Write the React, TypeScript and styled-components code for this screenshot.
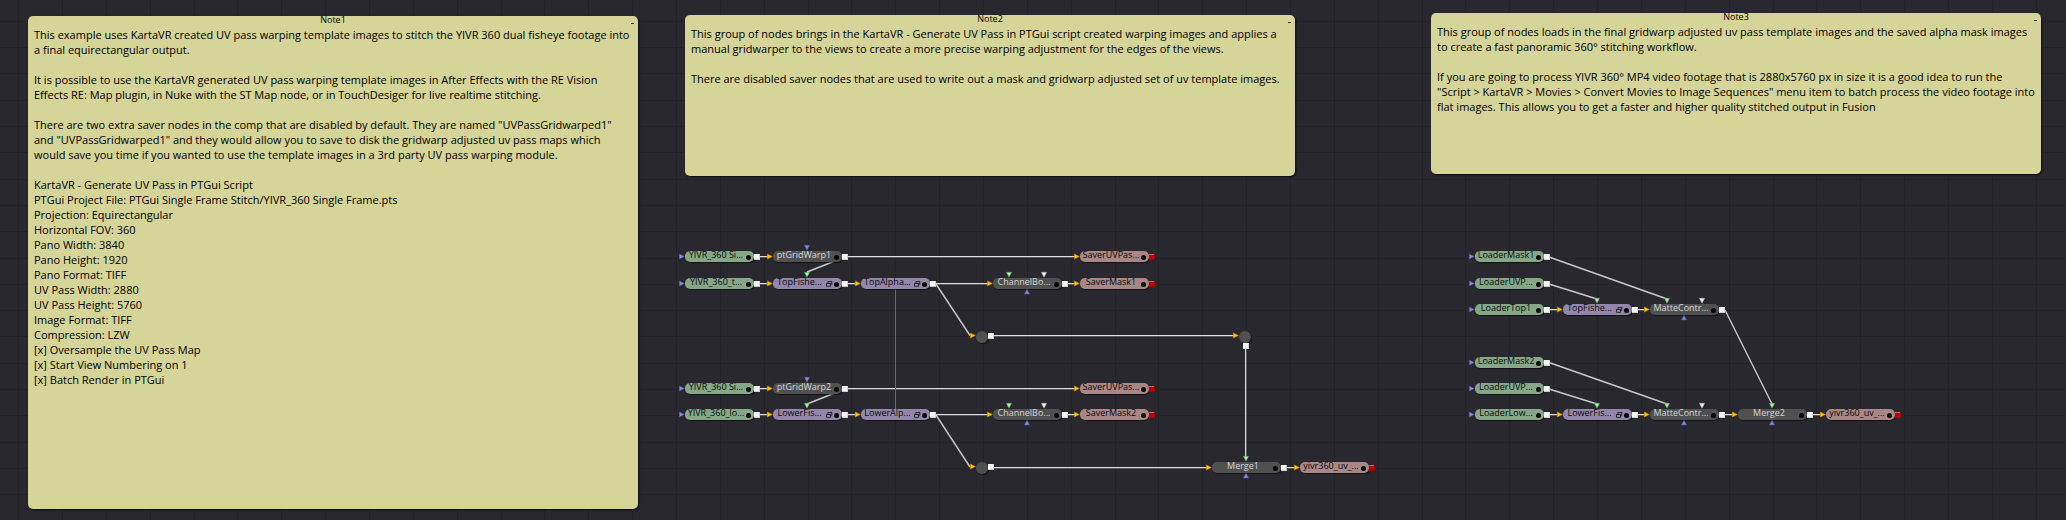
import React from "react";
import styled, { createGlobalStyle } from "styled-components";

const GlobalStyle = createGlobalStyle`
  html, body { margin: 0; padding: 0; background: #28282e; }
  body { overflow: hidden; }
`;

type Kind = "loader" | "tool" | "macro" | "saver";

const fills: Record<Kind, string> = {
  loader: "#86a787",
  tool: "#505050",
  macro: "#9287aa",
  saver: "#a98786",
};

const Canvas = styled.main`
  position: relative;
  width: 2066px;
  height: 520px;
  overflow: hidden;
  background: #28282e;
  font-family: "Open Sans", "Noto Sans", sans-serif;
`;

const Layer = styled.svg`
  position: absolute;
  inset: 0;
  width: 2066px;
  height: 520px;
  pointer-events: none;
`;

const NoteCard = styled.article<{ $x: number; $y: number; $h: number }>`
  position: absolute;
  left: ${(p) => p.$x}px;
  top: ${(p) => p.$y}px;
  width: 610px;
  height: ${(p) => p.$h}px;
  box-sizing: border-box;
  border-radius: 5px;
  background: #d5d499;
  box-shadow: 1px 1px 2px rgba(0, 0, 0, 0.75);
  color: #000;
  display: flex;
  flex-direction: column;
`;

const NoteTitle = styled.header`
  height: 11px;
  line-height: 7px;
  font-size: 9px;
  text-align: center;
`;

const NoteBody = styled.div`
  padding: 0 6px;
  font-size: 11px;
  line-height: 15px;
  white-space: pre;
`;

const Collapse = styled.span`
  position: absolute;
  right: 4px;
  top: 7px;
  width: 3px;
  height: 1px;
  background: #33332a;
`;

const NodeTile = styled.div<{ $x: number; $y: number; $kind: Kind }>`
  position: absolute;
  left: ${(p) => p.$x}px;
  top: ${(p) => p.$y}px;
  width: 69px;
  height: 11px;
  display: flex;
  align-items: flex-start;
  border-radius: 5px;
  background: ${(p) => fills[p.$kind]};
  box-shadow: 1px 1px 1px rgba(0, 0, 0, 0.55);
  color: ${(p) => (p.$kind === "tool" ? "#d4d4d4" : "#0a0a0a")};
`;

const NodeLabel = styled.span<{ $narrow: boolean }>`
  width: ${(p) => (p.$narrow ? 53 : 62)}px;
  flex: none;
  font-size: 9px;
  line-height: 7px;
  text-align: center;
  white-space: nowrap;
`;

const MacroIcon = styled.svg`
  width: 7px;
  height: 6px;
  margin-top: 2.5px;
  flex: none;
`;

const StatusDot = styled.i`
  position: absolute;
  right: 2.8px;
  top: 3.6px;
  width: 5.4px;
  height: 5.4px;
  border-radius: 50%;
  background: #050505;
`;

const Router = styled.div<{ $x: number; $y: number }>`
  position: absolute;
  left: ${(p) => p.$x - 6}px;
  top: ${(p) => p.$y - 6}px;
  width: 12px;
  height: 12px;
  border-radius: 50%;
  background: #505050;
  box-shadow: 1px 1px 1px rgba(0, 0, 0, 0.5);
`;

interface Tint {
  fill: string;
  edge: string;
}

interface NodeData {
  x: number;
  y: number;
  kind: Kind;
  label: string;
  top?: [number, Tint][];
  bottom?: number;
}

const GREEN: Tint = { fill: "#b4f0b6", edge: "#4f9a54" };
const WHITE: Tint = { fill: "#f8f8f8", edge: "#a8a8a8" };
const VIOLET: Tint = { fill: "#8c8cd8", edge: "#4c4ca4" };
const YELLOW: Tint = { fill: "#ffc800", edge: "#c07c00" };

const nodes: NodeData[] = [
  { x: 685, y: 251, kind: "loader", label: "YIVR_360 Si..." },
  { x: 773, y: 251, kind: "tool", label: "ptGridWarp1", top: [[34, VIOLET]] },
  { x: 1080, y: 251, kind: "saver", label: "SaverUVPas..." },
  { x: 685, y: 278, kind: "loader", label: "YIVR_360_t..." },
  { x: 773, y: 278, kind: "macro", label: "TopFishe...", top: [[34, GREEN]] },
  { x: 861, y: 278, kind: "macro", label: "TopAlpha..." },
  { x: 993, y: 278, kind: "tool", label: "ChannelBo...", top: [[16, GREEN], [51, WHITE]], bottom: 34 },
  { x: 1080, y: 278, kind: "saver", label: "SaverMask1" },
  { x: 685, y: 383, kind: "loader", label: "YIVR_360 Si..." },
  { x: 773, y: 383, kind: "tool", label: "ptGridWarp2", top: [[34, VIOLET]] },
  { x: 1080, y: 383, kind: "saver", label: "SaverUVPas..." },
  { x: 685, y: 409, kind: "loader", label: "YIVR_360_lo..." },
  { x: 773, y: 409, kind: "macro", label: "LowerFis...", top: [[34, GREEN]] },
  { x: 861, y: 409, kind: "macro", label: "LowerAlp..." },
  { x: 993, y: 409, kind: "tool", label: "ChannelBo...", top: [[16, GREEN], [51, WHITE]], bottom: 34 },
  { x: 1080, y: 409, kind: "saver", label: "SaverMask2" },
  { x: 1212, y: 462, kind: "tool", label: "Merge1", top: [[34, GREEN]], bottom: 34 },
  { x: 1300, y: 462, kind: "saver", label: "yivr360_uv_..." },
  { x: 1475, y: 251, kind: "loader", label: "LoaderMask1" },
  { x: 1475, y: 278, kind: "loader", label: "LoaderUVP..." },
  { x: 1475, y: 304, kind: "loader", label: "LoaderTop1" },
  { x: 1563, y: 304, kind: "macro", label: "TopFishe...", top: [[34, GREEN]] },
  { x: 1650, y: 304, kind: "tool", label: "MatteContr...", top: [[17, GREEN], [52, WHITE]], bottom: 34 },
  { x: 1475, y: 357, kind: "loader", label: "LoaderMask2" },
  { x: 1475, y: 383, kind: "loader", label: "LoaderUVP..." },
  { x: 1475, y: 409, kind: "loader", label: "LoaderLow..." },
  { x: 1563, y: 409, kind: "macro", label: "LowerFis...", top: [[34, GREEN]] },
  { x: 1650, y: 409, kind: "tool", label: "MatteContr...", top: [[17, GREEN], [52, WHITE]], bottom: 34 },
  { x: 1738, y: 409, kind: "tool", label: "Merge2", top: [[34, GREEN]], bottom: 34 },
  { x: 1826, y: 409, kind: "saver", label: "yivr360_uv_..." },
];

const routers = [
  { x: 982, y: 337, down: false },
  { x: 1245, y: 337, down: true },
  { x: 982, y: 468, down: false },
];

const straightWires: [number, number, number][] = [
  [759, 768, 256], [847, 1075, 256],
  [759, 768, 283], [847, 856, 283], [935, 988, 283], [1067, 1075, 283],
  [993, 1234, 335],
  [759, 768, 388], [847, 1075, 388],
  [759, 768, 414], [847, 856, 414], [935, 988, 414], [1067, 1075, 414],
  [993, 1207, 467], [1286, 1295, 467],
  [1549, 1558, 309], [1637, 1645, 309],
  [1549, 1558, 414], [1637, 1645, 414], [1724, 1733, 414], [1812, 1821, 414],
];

const slantedWires: [number, number, number, number][] = [
  [845, 257, 807, 272],
  [845, 389, 807, 404],
  [936, 284, 970, 335.5],
  [936, 415, 970, 467],
  [1549, 257, 1667, 299],
  [1549, 284, 1597, 299],
  [1549, 362.5, 1667, 404],
  [1549, 389, 1597, 404],
  [1725, 310, 1772, 404],
];

const note1 = `This example uses KartaVR created UV pass warping template images to stitch the YIVR 360 dual fisheye footage into
a final equirectangular output.

It is possible to use the KartaVR generated UV pass warping template images in After Effects with the RE Vision
Effects RE: Map plugin, in Nuke with the ST Map node, or in TouchDesiger for live realtime stitching.

There are two extra saver nodes in the comp that are disabled by default. They are named "UVPassGridwarped1"
and "UVPassGridwarped1" and they would allow you to save to disk the gridwarp adjusted uv pass maps which
would save you time if you wanted to use the template images in a 3rd party UV pass warping module.

KartaVR - Generate UV Pass in PTGui Script
PTGui Project File: PTGui Single Frame Stitch/YIVR_360 Single Frame.pts
Projection: Equirectangular
Horizontal FOV: 360
Pano Width: 3840
Pano Height: 1920
Pano Format: TIFF
UV Pass Width: 2880
UV Pass Height: 5760
Image Format: TIFF
Compression: LZW
[x] Oversample the UV Pass Map
[x] Start View Numbering on 1
[x] Batch Render in PTGui`;

const note2 = `This group of nodes brings in the KartaVR - Generate UV Pass in PTGui script created warping images and applies a
manual gridwarper to the views to create a more precise warping adjustment for the edges of the views.

There are disabled saver nodes that are used to write out a mask and gridwarp adjusted set of uv template images.`;

const note3 = `This group of nodes loads in the final gridwarp adjusted uv pass template images and the saved alpha mask images
to create a fast panoramic 360° stitching workflow.

If you are going to process YIVR 360° MP4 video footage that is 2880x5760 px in size it is a good idea to run the
"Script > KartaVR > Movies > Convert Movies to Image Sequences" menu item to batch process the video footage into
flat images. This allows you to get a faster and higher quality stitched output in Fusion`;

const notes = [
  { x: 28, y: 16, h: 493, title: "Note1", text: note1 },
  { x: 685, y: 15, h: 161, title: "Note2", text: note2 },
  { x: 1431, y: 13, h: 161, title: "Note3", text: note3 },
];

function Grid() {
  return (
    <Layer viewBox="0 0 2066 520" shapeRendering="crispEdges" fill="#222227">
      {Array.from({ length: 47 }, (_, i) => (
        <rect key={`v${i}`} x={Math.round(18.1 + 43.86 * i)} y={0} width={1} height={520} />
      ))}
      {Array.from({ length: 20 }, (_, i) => (
        <rect key={`h${i}`} x={0} y={Math.round(20.9 + 26.29 * i)} width={2066} height={1} />
      ))}
    </Layer>
  );
}

function Wires() {
  return (
    <Layer viewBox="0 0 2066 520">
      <g shapeRendering="crispEdges">
        {straightWires.map(([a, b, y]) => (
          <React.Fragment key={`${a}-${y}`}>
            <rect x={a} y={y} width={b - a} height={1} fill="#dededf" />
            <rect x={a} y={y + 1} width={b - a} height={1} fill="#55555a" />
          </React.Fragment>
        ))}
        <rect x={1245} y={349} width={1} height={108} fill="#dededf" />
        <rect x={1246} y={349} width={1} height={108} fill="#55555a" />
        <rect x={895} y={289} width={1} height={120} fill="#229a28" />
      </g>
      {slantedWires.map(([a, b, c, d]) => (
        <line key={`${a}-${b}`} x1={a} y1={b} x2={c} y2={d} stroke="#cacacc" strokeWidth={1.4} />
      ))}
    </Layer>
  );
}

function Arrow({ x, y, dir, tint }: { x: number; y: number; dir: "right" | "down" | "up"; tint: Tint }) {
  const shapes = {
    right: `${x + 0.3},${y + 0.2} ${x + 5.4},${y + 2.8} ${x + 0.3},${y + 5.4}`,
    down: `${x - 2.6},${y + 0.3} ${x + 2.6},${y + 0.3} ${x},${y + 5.2}`,
    up: `${x - 2.6},${y + 5} ${x + 2.6},${y + 5} ${x},${y + 0.3}`,
  };
  return (
    <polygon points={shapes[dir]} fill={tint.fill} stroke={tint.edge} strokeWidth={0.6} strokeLinejoin="round" />
  );
}

function OutPort({ x, y, end }: { x: number; y: number; end?: boolean }) {
  return (
    <g>
      <rect x={x} y={y} width={6} height={6} fill={end ? "#9c0808" : "#cfcfcf"} />
      <rect x={x} y={y} width={5} height={5} fill={end ? "#c40000" : "#f4f4f4"} />
      {end && <rect x={x} y={y} width={5} height={1} fill="#d86060" />}
    </g>
  );
}

function Ports() {
  return (
    <Layer viewBox="0 0 2066 520">
      {nodes.map((n) => (
        <g key={`${n.x}-${n.y}`}>
          <Arrow x={n.x - 6} y={n.y + 2.7} dir="right" tint={n.kind === "loader" ? VIOLET : YELLOW} />
          <OutPort x={n.x + 69} y={n.y + 3} end={n.kind === "saver"} />
          {n.top?.map(([dx, tint]) => (
            <Arrow key={dx} x={n.x + dx} y={n.y - 6} dir="down" tint={tint} />
          ))}
          {n.bottom && <Arrow x={n.x + n.bottom} y={n.y + 11} dir="up" tint={VIOLET} />}
        </g>
      ))}
      {routers.map((r) => (
        <g key={`${r.x}-${r.y}`}>
          <Arrow x={r.x - 12} y={r.y - 4.3} dir="right" tint={YELLOW} />
          <OutPort x={r.down ? r.x - 2 : r.x + 6} y={r.down ? r.y + 6 : r.y - 4} />
        </g>
      ))}
    </Layer>
  );
}

function NodeView({ node }: { node: NodeData }) {
  const macro = node.kind === "macro";
  return (
    <NodeTile $x={node.x} $y={node.y} $kind={node.kind}>
      <NodeLabel $narrow={macro}>{node.label}</NodeLabel>
      {macro && (
        <MacroIcon viewBox="0 0 7 6" fill="#9287aa" stroke="#141414" strokeWidth="0.8">
          <rect x="2" y="0.5" width="3.8" height="2.6" />
          <rect x="0.6" y="2.5" width="3.8" height="2.8" />
        </MacroIcon>
      )}
      <StatusDot />
    </NodeTile>
  );
}

export default function App() {
  return (
    <Canvas>
      <GlobalStyle />
      <Grid />
      {notes.map((n) => (
        <NoteCard key={n.title} $x={n.x} $y={n.y} $h={n.h}>
          <NoteTitle>{n.title}</NoteTitle>
          <NoteBody>{n.text}</NoteBody>
          <Collapse />
        </NoteCard>
      ))}
      <Wires />
      {nodes.map((n) => (
        <NodeView key={`${n.x}-${n.y}`} node={n} />
      ))}
      {routers.map((r) => (
        <Router key={`${r.x}-${r.y}`} $x={r.x} $y={r.y} />
      ))}
      <Ports />
    </Canvas>
  );
}
